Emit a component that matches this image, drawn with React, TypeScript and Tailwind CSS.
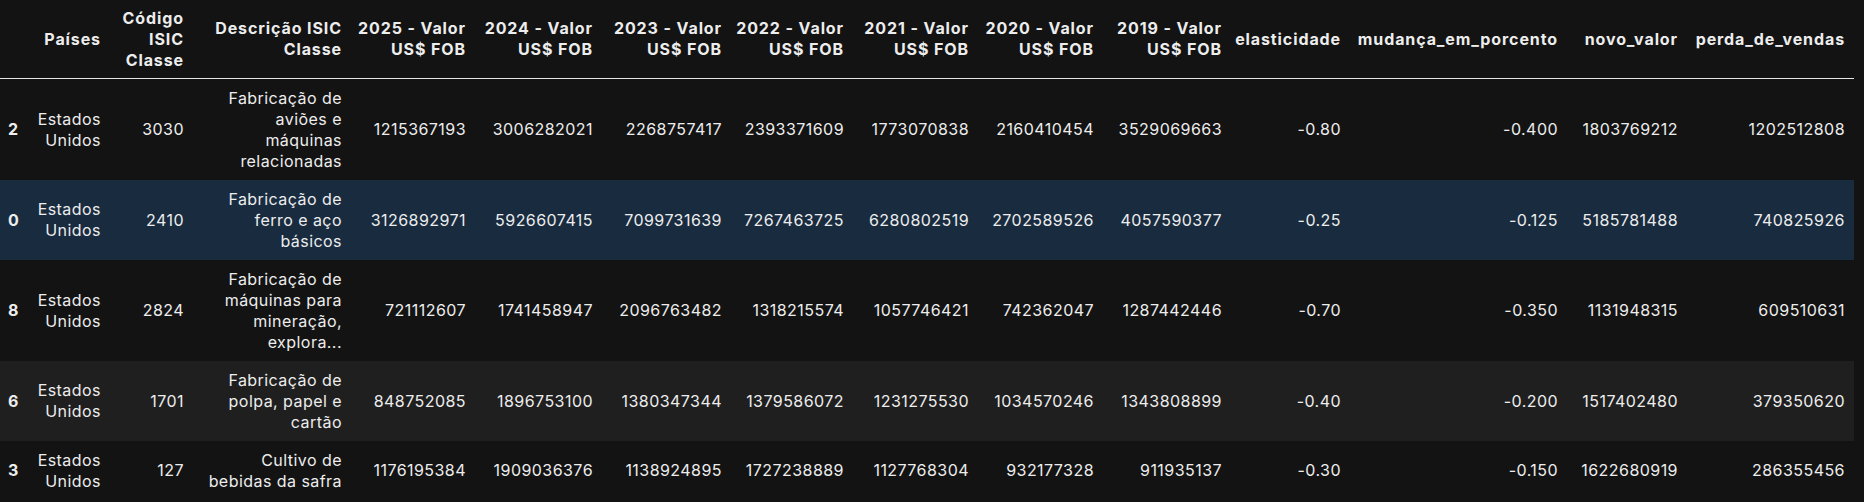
import React from "react";

const headers: React.ReactNode[] = [
  "",
  "Países",
  <>Código<br />ISIC<br />Classe</>,
  <>Descrição ISIC<br />Classe</>,
  <>2025 - Valor<br />US$ FOB</>,
  <>2024 - Valor<br />US$ FOB</>,
  <>2023 - Valor<br />US$ FOB</>,
  <>2022 - Valor<br />US$ FOB</>,
  <>2021 - Valor<br />US$ FOB</>,
  <>2020 - Valor<br />US$ FOB</>,
  <>2019 - Valor<br />US$ FOB</>,
  "elasticidade",
  "mudança_em_porcento",
  "novo_valor",
  "perda_de_vendas",
];

const widths = [30, 80, 83, 158, 124, 127, 129, 122, 125, 125, 128, 119, 217, 120, 167];

type Row = {
  idx: string;
  code: string;
  desc: string[];
  vals: string[];
  bg: string;
};

const rows: Row[] = [
  {
    idx: "2",
    code: "3030",
    desc: ["Fabricação de", "aviões e", "máquinas", "relacionadas"],
    vals: ["1215367193", "3006282021", "2268757417", "2393371609", "1773070838", "2160410454", "3529069663", "-0.80", "-0.400", "1803769212", "1202512808"],
    bg: "bg-[#131313]",
  },
  {
    idx: "0",
    code: "2410",
    desc: ["Fabricação de", "ferro e aço", "básicos"],
    vals: ["3126892971", "5926607415", "7099731639", "7267463725", "6280802519", "2702589526", "4057590377", "-0.25", "-0.125", "5185781488", "740825926"],
    bg: "bg-[#182b3f]",
  },
  {
    idx: "8",
    code: "2824",
    desc: ["Fabricação de", "máquinas para", "mineração,", "explora..."],
    vals: ["721112607", "1741458947", "2096763482", "1318215574", "1057746421", "742362047", "1287442446", "-0.70", "-0.350", "1131948315", "609510631"],
    bg: "bg-[#131313]",
  },
  {
    idx: "6",
    code: "1701",
    desc: ["Fabricação de", "polpa, papel e", "cartão"],
    vals: ["848752085", "1896753100", "1380347344", "1379586072", "1231275530", "1034570246", "1343808899", "-0.40", "-0.200", "1517402480", "379350620"],
    bg: "bg-[#1f1f1f]",
  },
  {
    idx: "3",
    code: "127",
    desc: ["Cultivo de", "bebidas da safra"],
    vals: ["1176195384", "1909036376", "1138924895", "1727238889", "1127768304", "932177328", "911935137", "-0.30", "-0.150", "1622680919", "286355456"],
    bg: "bg-[#131313]",
  },
];

const td = "pr-[9px] py-[8.5px] text-right align-middle whitespace-nowrap tracking-[0.45px]";

export default function App() {
  return (
    <div
      className="min-h-screen w-full bg-[#131313] text-[#ededed] text-[16px] leading-[21px]"
      style={{ fontFamily: "Inter, 'Noto Sans', 'Liberation Sans', sans-serif" }}
    >
      <table className="table-fixed border-collapse w-[1854px]">
        <colgroup>
          {widths.map((w, i) => (
            <col key={i} style={{ width: w }} />
          ))}
        </colgroup>
        <thead>
          <tr className="border-b border-[#e6e6e6]">
            {headers.map((h, i) => (
              <th
                key={i}
                className={
                  i === 0
                    ? "pl-[8px] py-[7.5px] text-left font-bold whitespace-nowrap align-middle"
                    : "pr-[9px] py-[7.5px] text-right font-bold whitespace-nowrap align-middle tracking-[0.9px]"
                }
              >
                {h}
              </th>
            ))}
          </tr>
        </thead>
        <tbody>
          {rows.map((r) => (
            <tr key={r.idx} className={r.bg}>
              <th className="pl-[8px] py-[8.5px] text-left font-bold align-middle">{r.idx}</th>
              <td className={td}>
                Estados<br />Unidos
              </td>
              <td className={td}>{r.code}</td>
              <td className={td}>
                {r.desc.map((d, j) => (
                  <React.Fragment key={j}>
                    {j > 0 && <br />}
                    {d}
                  </React.Fragment>
                ))}
              </td>
              {r.vals.map((v, j) => (
                <td key={j} className={td}>
                  {v}
                </td>
              ))}
            </tr>
          ))}
        </tbody>
      </table>
    </div>
  );
}
